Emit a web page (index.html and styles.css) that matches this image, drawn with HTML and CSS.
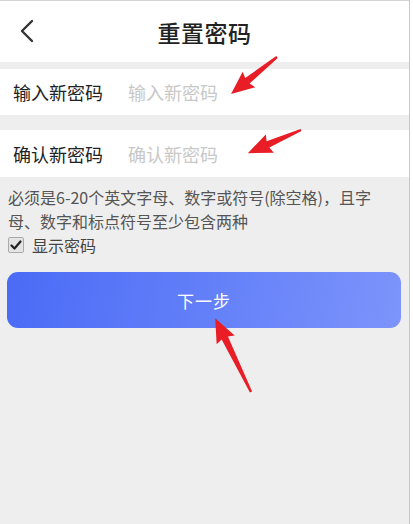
FILE: index.html
```html
<!DOCTYPE html>
<html lang="zh-CN">
<head>
  <meta charset="UTF-8" />
  <meta name="viewport" content="width=device-width, initial-scale=1.0" />
  <title>重置密码</title>
  <link rel="stylesheet" href="styles.css">
</head>
<body>
  <div class="screen">
    <div class="header">
      <span class="back">
        <svg width="16" height="24" viewBox="0 0 16 24"><path d="M13 2 L3 12 L13 22" fill="none" stroke="#333" stroke-width="2.4" stroke-linecap="round" stroke-linejoin="round"/></svg>
      </span>
      <h1>重置密码</h1>
    </div>

    <div class="field first">
      <label>输入新密码</label>
      <input type="password" placeholder="输入新密码" />
    </div>
    <div class="field">
      <label>确认新密码</label>
      <input type="password" placeholder="确认新密码" />
    </div>

    <p class="hint">必须是6-20个英文字母、数字或符号(除空格)，且字母、数字和标点符号至少包含两种</p>

    <div class="show-pwd">
      <span class="check">
        <svg width="12" height="12" viewBox="0 0 12 12"><path d="M1.5 6.5 L4.5 9.5 L10.5 2.5" fill="none" stroke="#222" stroke-width="2.2" stroke-linecap="round" stroke-linejoin="round"/></svg>
      </span>
      <span>显示密码</span>
    </div>

    <button class="next">下一步</button>

    <svg class="marks" width="413" height="524" viewBox="0 0 413 524">
      <g fill="#e81d25">
        <polygon transform="translate(277,57) rotate(141.2)" points="0,-1.2 38,-3.5 36,-10 59,0 36,10 38,3.5 0,1.2" />
        <polygon transform="translate(301,130) rotate(156.5)" points="0,-1.2 36,-3.5 34,-10 58,0 34,10 36,3.5 0,1.2" />
        <polygon transform="translate(251,392) rotate(-115.9)" points="0,-1.2 60,-3.5 58,-10 82,0 58,10 60,3.5 0,1.2" />
      </g>
    </svg>
  </div>
</body>
</html>
```

FILE: styles.css
```css
body {
  margin: 0;
  background: #fff;
  font-family: "Noto Sans CJK SC", "Noto Sans", sans-serif;
}
.screen {
  position: relative;
  width: 409px;
  height: 523px;
  background: #eee;
  border-top: 1px solid #d4d4d4;
  border-right: 1px solid #c8c8c8;
}
.header {
  height: 61px;
  background: #fff;
  display: flex;
  align-items: center;
  justify-content: center;
  position: relative;
}
.header h1 {
  margin: 0;
  font-size: 23px;
  font-weight: 500;
  color: #222;
  letter-spacing: 0.5px;
}
.back {
  position: absolute;
  left: 19px;
  top: 18px;
  display: flex;
}
.field {
  height: 46px;
  background: #fff;
  display: flex;
  align-items: center;
  padding-left: 13px;
  margin-top: 15px;
}
.field.first {
  margin-top: 7px;
}
.field + .field {
  height: 47px;
}
.field label {
  width: 115px;
  font-size: 18px;
  color: #222;
}
.field input {
  border: none;
  outline: none;
  font-family: inherit;
  font-size: 18px;
  padding: 0;
  background: transparent;
}
.field input::placeholder {
  color: #c8c8c8;
}
.hint {
  margin: 8px 30px 0 8px;
  font-size: 16px;
  line-height: 24px;
  color: #555;
}
.show-pwd {
  display: flex;
  align-items: center;
  gap: 8px;
  margin: 0 0 0 8px;
  height: 24px;
  font-size: 16px;
  color: #444;
}
.check {
  width: 14px;
  height: 14px;
  border: 1px solid #aaa;
  border-radius: 2px;
  background: #e4e4e4;
  display: flex;
  align-items: center;
  justify-content: center;
}
.next {
  display: block;
  margin: 15px 0 0 7px;
  width: 394px;
  height: 56px;
  border: none;
  border-radius: 11px;
  background: linear-gradient(100deg, #4a6bf6, #7c94fb);
  color: #fff;
  font-family: inherit;
  font-size: 17px;
  letter-spacing: 1px;
}
.marks {
  position: absolute;
  top: -1px;
  left: 0;
  pointer-events: none;
}
```
